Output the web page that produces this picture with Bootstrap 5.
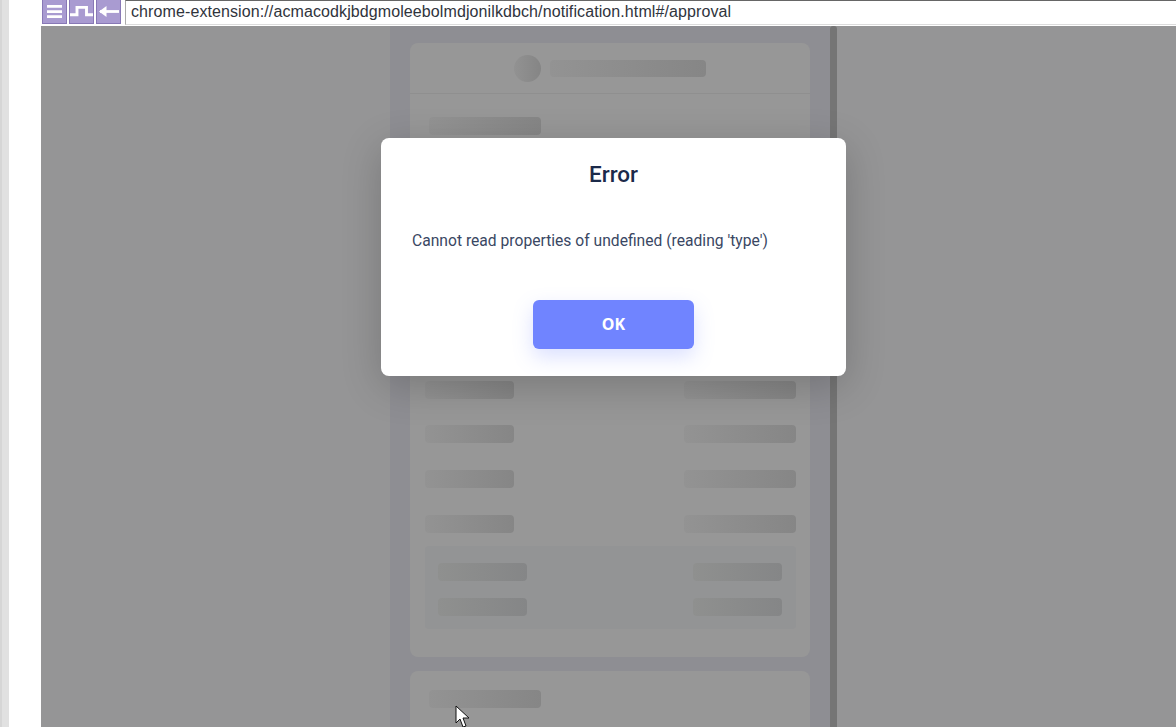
<!DOCTYPE html>
<html lang="en">
<head>
<meta charset="utf-8">
<title>Error</title>
<link rel="stylesheet" href="https://cdn.jsdelivr.net/npm/bootstrap@5.3.0/dist/css/bootstrap.min.css">
<style>
html,body{height:727px;overflow:hidden;background:#fff}
.shell{width:1176px;height:727px}
.gutter{width:41px;flex:none;background:linear-gradient(90deg,#d6d6d6 0 2px,#e1e1e1 2px 9px,#fff 9px)}
.topbar{height:26px;flex:none;gap:2px;padding:0 0 1px 1px;background:#fff}
.tool{width:25px;height:24px;flex:none;background:#a99bd1;border:1px solid #8878b6;border-top:0;color:#fff;padding:0}
.tool svg{display:block}
.address{margin-left:2px;height:25px;border-top:1px solid #666;border-left:1px solid #aaa;border-bottom:1px solid #dcdcdc;box-shadow:0 1px 0 #fff,0 2px 0 #777;padding:0 0 1px 5px;font:16px/21px "Liberation Sans",Arial,sans-serif;letter-spacing:.1px;color:#30343c;white-space:nowrap}
.stage{height:701px;background:#959596;padding-left:349px}
.rail{width:440px;height:701px;background:#8e8e93;padding:17px 20px 0;flex:none}
.thumb{width:7px;height:701px;background:#757575;border-radius:3px 3px 0 0;flex:none}
.sheet{background:#979797;border-radius:8px}
.sheet-main{height:614px;margin-bottom:14px}
.sheet-head{height:51px;border-bottom:1px solid #8f8f8f;gap:9px}
.disc{width:27px;height:27px;border-radius:50%;background:linear-gradient(90deg,#929292,#858585)}
.bone{height:18px;border-radius:4px;background:linear-gradient(90deg,#939393,#868686)}
.bone-title{width:156px;height:17px}
.bone-lg{width:112px}
.bone-sm{width:89px}
.lead-bone{margin:23px 0 0 19px}
.rows{margin:22.5px 14px 0 15px;gap:26.67px}
.tray{margin:13px 14px 0 15px;padding:17px 14px 13px 13px;gap:17px;background:#939495;border-radius:4px}
.tray .bone{background:linear-gradient(90deg,#8f908f,#858687)}
.sheet-foot{height:70px;padding:19px 19px 0}
.dialog{left:340px;top:112px;width:465px;height:238px;background:#fff;border-radius:8px;box-shadow:0 10px 40px rgba(0,0,0,.2);font-family:Roboto,sans-serif}
.dialog-title{margin:21px 0 0;font-size:22.5px;line-height:30px;font-weight:500;color:#1b2a4a}
.dialog-msg{margin:41px 0 0 31px;font-size:15.65px;line-height:22px;color:#3a4763}
.dialog-btn{width:161px;height:49px;margin-top:48px;padding:0 0 1px;background:#7084ff;border:0;border-radius:6px;color:#fff;font:700 16px "Noto Sans",sans-serif;box-shadow:0 8px 20px rgba(112,132,255,.25)}
.dialog-btn:hover{background:#7084ff;color:#fff}
.pointer{left:455px;top:705px}
</style>
</head>
<body>
<div class="shell d-flex flex-column position-relative overflow-hidden">
  <div class="d-flex flex-grow-1">
    <div class="gutter"></div>
    <div class="flex-grow-1 d-flex flex-column">
      <div class="topbar d-flex">
        <button class="tool" aria-label="Menu"><svg width="23" height="23" viewBox="0 0 23 23"><path d="M4 6.3h15M4 11.6h15M4 16.6h15" stroke="#fff" stroke-width="2.7" fill="none"/></svg></button>
        <button class="tool" aria-label="Pulse"><svg width="23" height="23" viewBox="0 0 23 23"><path d="M0 14.8h7V7.4h9.500v7.400h6.500" stroke="#fff" stroke-width="2.9" fill="none"/></svg></button>
        <button class="tool" aria-label="Back"><svg width="23" height="23" viewBox="0 0 23 23"><path d="M3 11.5h19" stroke="#fff" stroke-width="2.800" fill="none"/><path d="M2 11.500l7.500-5.500v11z" fill="#fff"/></svg></button>
        <div class="address flex-grow-1">chrome-extension://acmacodkjbdgmoleebolmdjonilkdbch/notification.html#/approval</div>
      </div>
      <div class="stage d-flex position-relative">
        <div class="rail">
          <div class="sheet sheet-main">
            <div class="sheet-head d-flex align-items-center justify-content-center">
              <div class="disc"></div>
              <div class="bone bone-title"></div>
            </div>
            <div class="bone bone-lg lead-bone"></div>
            <div class="rows d-flex flex-column">
              <div class="d-flex justify-content-between"><div class="bone bone-sm"></div><div class="bone bone-lg"></div></div>
              <div class="d-flex justify-content-between"><div class="bone bone-sm"></div><div class="bone bone-lg"></div></div>
              <div class="d-flex justify-content-between"><div class="bone bone-sm"></div><div class="bone bone-lg"></div></div>
              <div class="d-flex justify-content-between"><div class="bone bone-sm"></div><div class="bone bone-lg"></div></div>
              <div class="d-flex justify-content-between"><div class="bone bone-sm"></div><div class="bone bone-lg"></div></div>
              <div class="d-flex justify-content-between"><div class="bone bone-sm"></div><div class="bone bone-lg"></div></div>
              <div class="d-flex justify-content-between"><div class="bone bone-sm"></div><div class="bone bone-lg"></div></div>
              <div class="d-flex justify-content-between"><div class="bone bone-sm"></div><div class="bone bone-lg"></div></div>
              <div class="d-flex justify-content-between"><div class="bone bone-sm"></div><div class="bone bone-lg"></div></div>
            </div>
            <div class="tray d-flex flex-column">
              <div class="d-flex justify-content-between"><div class="bone bone-sm"></div><div class="bone bone-sm"></div></div>
              <div class="d-flex justify-content-between"><div class="bone bone-sm"></div><div class="bone bone-sm"></div></div>
            </div>
          </div>
          <div class="sheet sheet-foot"><div class="bone bone-lg"></div></div>
        </div>
        <div class="thumb"></div>
        <div class="dialog position-absolute d-flex flex-column">
          <h5 class="dialog-title text-center">Error</h5>
          <p class="dialog-msg">Cannot read properties of undefined (reading 'type')</p>
          <div class="text-center"><button class="btn dialog-btn">OK</button></div>
        </div>
      </div>
    </div>
  </div>
  <svg class="pointer position-absolute" width="18" height="24" viewBox="0 0 18 24"><path d="M1 1v17l4-4 3 8 3-1-3-8h6z" fill="#fff" stroke="#111" stroke-width="1"/></svg>
</div>
<script src="https://cdn.jsdelivr.net/npm/bootstrap@5.3.0/dist/js/bootstrap.bundle.min.js"></script>
</body>
</html>
